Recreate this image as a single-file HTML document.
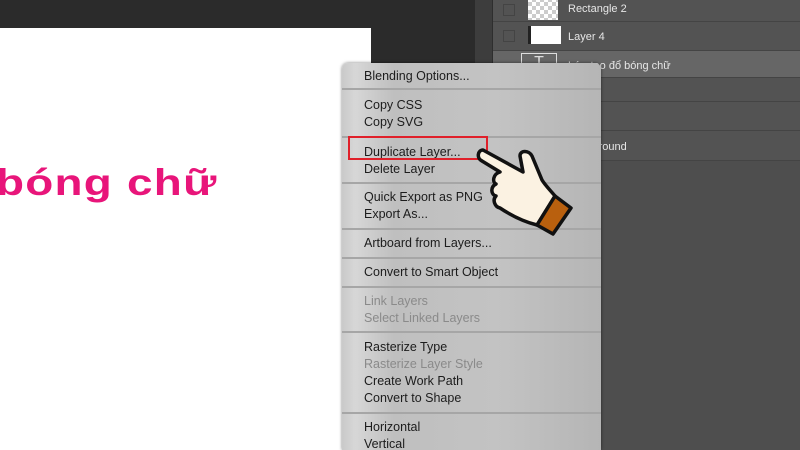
<!DOCTYPE html>
<html style="overflow:hidden;height:450px"><head><style>
body{margin:0;width:800px;height:450px;overflow:hidden;background:#2b2b2b;font-family:"Liberation Sans","DejaVu Sans",sans-serif;position:relative}
.canvas{position:absolute;left:0;top:28px;width:371px;height:422px;background:#fff;overflow:hidden}
.title{position:absolute;left:-4px;top:134px;font-size:37px;font-weight:bold;color:#e8157a;letter-spacing:1px;transform:scaleX(1.24);transform-origin:left;white-space:nowrap}
.panel{position:absolute;left:475px;top:0;width:325px;height:450px;background:#4e4e4e}
.strip{position:absolute;left:0;top:0;width:17px;height:450px;background:#3d3d3d;border-right:1px solid #2e2e2e}
.row{position:absolute;left:18px;right:0;background:#535353;border-bottom:1px solid #444;color:#e6e6e6;font-size:11px}
.row span{position:absolute;left:75px}
.chk{position:absolute;left:10px;width:10px;height:10px;border:1px solid #444}
.menu{position:absolute;left:342px;top:63px;width:259px;height:387px;border-radius:6px 6px 0 0;background:linear-gradient(90deg,#c9c9c9 0%,#d7d7d7 5%,#bfbfbf 20%,#c3c3c3 60%,#b5b5b5 100%);box-shadow:0 0 3px rgba(0,0,0,.5);overflow:hidden}
.it{position:absolute;left:22px;font-size:12.5px;color:#1c1c1c;line-height:17px}
.dis{color:#8a8a8a}
.sep{position:absolute;left:0;right:0;height:2px;background:#a6a6a6}
.red{position:absolute;left:348px;top:136px;width:140px;height:24px;border:2px solid #e0202a;box-sizing:border-box}
</style></head><body>
<div class="canvas"><div class="title">bóng chữ</div></div>
<div class="panel">
<div class="strip"></div>
<div class="row" style="top:0;height:21px"><div class="chk" style="top:4px"></div><div style="position:absolute;left:35px;top:-2px;width:30px;height:22px;background:repeating-conic-gradient(#ccc 0 25%,#fff 0 50%) 0 0/8px 8px"></div><span style="top:3px">Rectangle 2</span></div>
<div class="row" style="top:22px;height:28px"><div class="chk" style="top:8px"></div><div style="position:absolute;left:35px;top:4px;width:30px;height:18px;background:#fff;border-left:3px solid #222"></div><span style="top:9px">Layer 4</span></div>
<div class="row" style="top:51px;height:26px;background:#666"><div style="position:absolute;left:28px;top:2px;width:34px;height:20px;border:1px solid #ddd;border-width:1px 1px 0 1px;color:#ddd;font-size:16px;text-align:center">T</div><span style="top:9px">Lớp tạo đổ bóng chữ</span></div>
<div class="row" style="top:78px;height:23px"></div>
<div class="row" style="top:102px;height:28px"></div>
<div class="row" style="top:131px;height:29px"><span style="top:10px">Background</span></div>
</div>
<div class="menu">
<div class="it" style="top:5px">Blending Options...</div>
<div class="sep" style="top:25px"></div>
<div class="it" style="top:34px">Copy CSS</div>
<div class="it" style="top:51px">Copy SVG</div>
<div class="sep" style="top:73px"></div>
<div class="it" style="top:81px">Duplicate Layer...</div>
<div class="it" style="top:98px">Delete Layer</div>
<div class="sep" style="top:119px"></div>
<div class="it" style="top:126px">Quick Export as PNG</div>
<div class="it" style="top:143px">Export As...</div>
<div class="sep" style="top:165px"></div>
<div class="it" style="top:172px">Artboard from Layers...</div>
<div class="sep" style="top:194px"></div>
<div class="it" style="top:201px">Convert to Smart Object</div>
<div class="sep" style="top:223px"></div>
<div class="it dis" style="top:230px">Link Layers</div>
<div class="it dis" style="top:247px">Select Linked Layers</div>
<div class="sep" style="top:268px"></div>
<div class="it" style="top:276px">Rasterize Type</div>
<div class="it dis" style="top:293px">Rasterize Layer Style</div>
<div class="it" style="top:310px">Create Work Path</div>
<div class="it" style="top:327px">Convert to Shape</div>
<div class="sep" style="top:349px"></div>
<div class="it" style="top:356px">Horizontal</div>
<div class="it" style="top:373px">Vertical</div>
</div>
<div class="red"></div>
<svg style="position:absolute;left:0;top:0" width="800" height="450">
<path d="M483,150 C478,150 476,158 482,161 L500,172 C493,174 492,182 496,184 C490,187 491,195 496,196 C492,200 495,207 500,208 C512,216 525,222 537,225 L555,196 C550,190 545,185 542,180 L532,156 C529,150 520,150 520,156 L523,172 Z" fill="#fbf2e2" stroke="#111" stroke-width="3.5" stroke-linejoin="round"/>
<path d="M555,196 L571,208 L553,234 L537,225 Z" fill="#b9600e" stroke="#111" stroke-width="3.5" stroke-linejoin="round"/>
</svg>
</body></html>
